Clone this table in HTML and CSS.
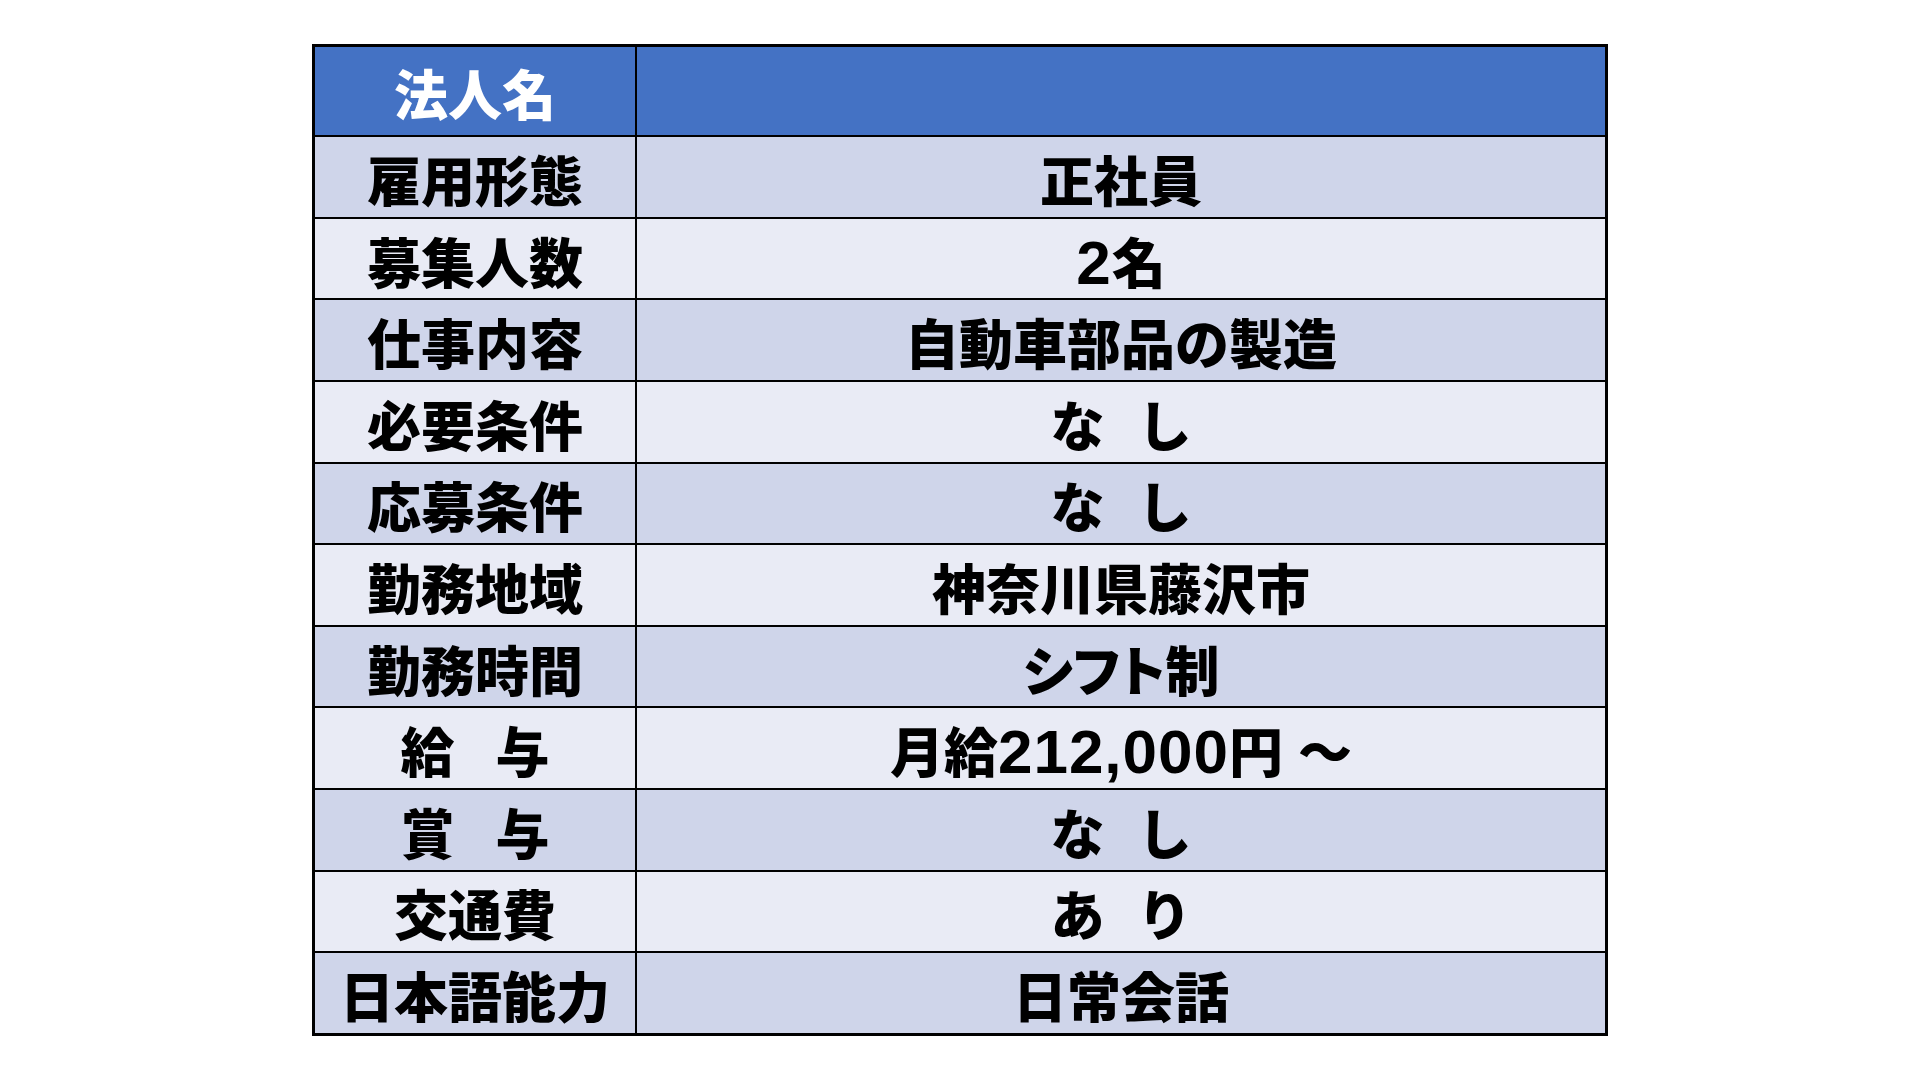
FILE: index.html
```html
<!DOCTYPE html>
<html lang="ja">
<head>
<meta charset="utf-8">
<title>求人票</title>
<link rel="stylesheet" href="styles.css">
</head>
<body>
<main class="page">
  <table class="job">
    <thead>
      <tr class="head">
        <th class="label">法人名</th>
        <th class="value"></th>
      </tr>
    </thead>
    <tbody>
      <tr class="dark"><th class="label">雇用形態</th><td class="value">正社員</td></tr>
      <tr class="light"><th class="label">募集人数</th><td class="value"><span class="num">2</span>名</td></tr>
      <tr class="dark"><th class="label">仕事内容</th><td class="value">自動車部品の製造</td></tr>
      <tr class="light"><th class="label">必要条件</th><td class="value spaced">な し</td></tr>
      <tr class="dark"><th class="label">応募条件</th><td class="value spaced">な し</td></tr>
      <tr class="light"><th class="label">勤務地域</th><td class="value">神奈川県藤沢市</td></tr>
      <tr class="dark"><th class="label">勤務時間</th><td class="value palt">シフト制</td></tr>
      <tr class="light"><th class="label wide">給 与</th><td class="value">月給<span class="num">212,000</span>円 ～</td></tr>
      <tr class="dark"><th class="label wide">賞 与</th><td class="value spaced">な し</td></tr>
      <tr class="light"><th class="label">交通費</th><td class="value spaced">あ り</td></tr>
      <tr class="dark"><th class="label">日本語能力</th><td class="value">日常会話</td></tr>
    </tbody>
  </table>
</main>
</body>
</html>
```

FILE: styles.css
```css
html, body {
  margin: 0;
  padding: 0;
  background: #ffffff;
}

.page {
  height: 1080px;
  display: flex;
  align-items: center;
  justify-content: center;
}

.job {
  border-collapse: collapse;
  width: 1296px;
  border: 3px solid #000;
  font-family: "Liberation Sans", "Noto Sans CJK JP", sans-serif;
  font-weight: 900;
  font-size: 54px;
  color: #000;
}

.job th,
.job td {
  border: 2px solid #000;
  padding: 12px 0 0 0;
  text-align: center;
  vertical-align: middle;
  line-height: 1;
  font-weight: 900;
  white-space: pre;
}

.job .label {
  width: 320px;
}

.head th {
  height: 76px;
  background: #4472c4;
  color: #ffffff;
}

.job tbody th,
.job tbody td {
  height: 67.6px;
}

.dark th,
.dark td {
  background: #cfd5ea;
}

.light th,
.light td {
  background: #e9ebf5;
}

.num {
  font-size: 62px;
  line-height: 0.8;
  letter-spacing: 1px;
}

.spaced {
  word-spacing: 18px;
}

.wide {
  word-spacing: 26px;
}

.palt {
  font-feature-settings: "palt" 1;
}
```
